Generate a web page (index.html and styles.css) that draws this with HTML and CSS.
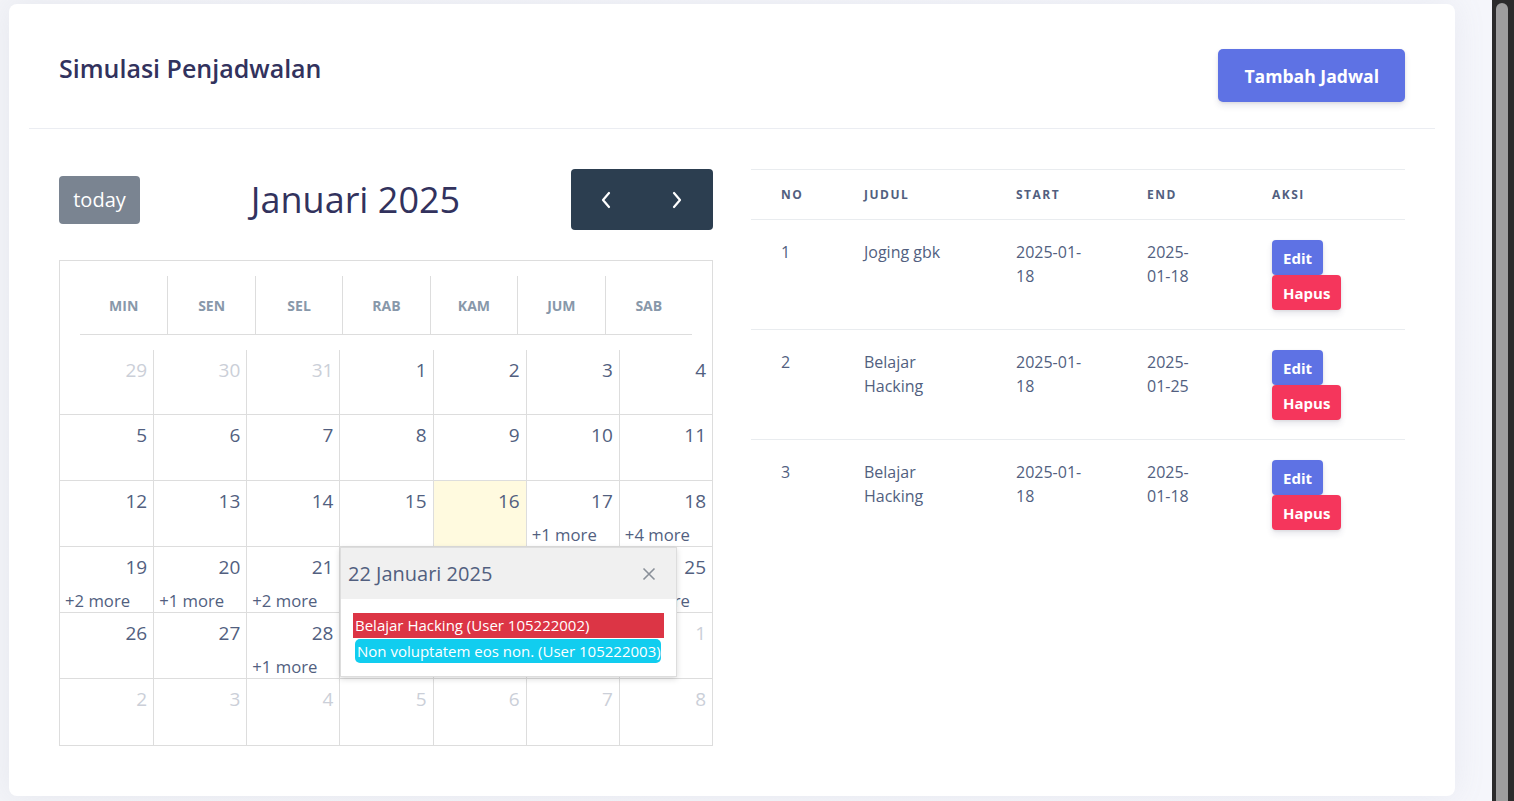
FILE: index.html
```html
<!DOCTYPE html>
<html lang="id">
<head>
<meta charset="utf-8">
<title>Simulasi Penjadwalan</title>
<link rel="stylesheet" href="styles.css">
</head>
<body>
<div class="viewport">
  <main class="page">
    <section class="card">
      <header class="card-header">
        <h3 class="card-title">Simulasi Penjadwalan</h3>
        <button class="btn btn-primary btn-lg">Tambah Jadwal</button>
      </header>
      <div class="card-body">
        <div class="calendar">
          <div class="cal-toolbar">
            <button class="btn-today">today</button>
            <h2 class="cal-title">Januari 2025</h2>
            <div class="cal-nav">
              <button class="nav-btn" aria-label="prev"><svg width="12" height="18" viewBox="0 0 12 18"><path d="M9 2 L3 9 L9 16" fill="none" stroke="#fff" stroke-width="2.2" stroke-linecap="round" stroke-linejoin="round"/></svg></button>
              <button class="nav-btn" aria-label="next"><svg width="12" height="18" viewBox="0 0 12 18"><path d="M3 2 L9 9 L3 16" fill="none" stroke="#fff" stroke-width="2.2" stroke-linecap="round" stroke-linejoin="round"/></svg></button>
            </div>
          </div>
          <div class="cal-grid">
            <div class="cal-head">
              <div class="dow">Min</div>
              <div class="dow">Sen</div>
              <div class="dow">Sel</div>
              <div class="dow">Rab</div>
              <div class="dow">Kam</div>
              <div class="dow">Jum</div>
              <div class="dow">Sab</div>
            </div>
            <div class="cal-body">
              <div class="day other"><span class="num">29</span></div>
              <div class="day other"><span class="num">30</span></div>
              <div class="day other"><span class="num">31</span></div>
              <div class="day"><span class="num">1</span></div>
              <div class="day"><span class="num">2</span></div>
              <div class="day"><span class="num">3</span></div>
              <div class="day"><span class="num">4</span></div>

              <div class="day"><span class="num">5</span></div>
              <div class="day"><span class="num">6</span></div>
              <div class="day"><span class="num">7</span></div>
              <div class="day"><span class="num">8</span></div>
              <div class="day"><span class="num">9</span></div>
              <div class="day"><span class="num">10</span></div>
              <div class="day"><span class="num">11</span></div>

              <div class="day"><span class="num">12</span></div>
              <div class="day"><span class="num">13</span></div>
              <div class="day"><span class="num">14</span></div>
              <div class="day"><span class="num">15</span></div>
              <div class="day today"><span class="num">16</span></div>
              <div class="day"><span class="num">17</span><a class="more">+1 more</a></div>
              <div class="day"><span class="num">18</span><a class="more">+4 more</a></div>

              <div class="day"><span class="num">19</span><a class="more">+2 more</a></div>
              <div class="day"><span class="num">20</span><a class="more">+1 more</a></div>
              <div class="day"><span class="num">21</span><a class="more">+2 more</a></div>
              <div class="day"><span class="num">22</span><a class="more">+2 more</a></div>
              <div class="day"><span class="num">23</span></div>
              <div class="day"><span class="num">24</span></div>
              <div class="day"><span class="num">25</span><a class="more">+1 more</a></div>

              <div class="day"><span class="num">26</span></div>
              <div class="day"><span class="num">27</span></div>
              <div class="day"><span class="num">28</span><a class="more">+1 more</a></div>
              <div class="day"><span class="num">29</span></div>
              <div class="day"><span class="num">30</span></div>
              <div class="day"><span class="num">31</span></div>
              <div class="day other"><span class="num">1</span></div>

              <div class="day other"><span class="num">2</span></div>
              <div class="day other"><span class="num">3</span></div>
              <div class="day other"><span class="num">4</span></div>
              <div class="day other"><span class="num">5</span></div>
              <div class="day other"><span class="num">6</span></div>
              <div class="day other"><span class="num">7</span></div>
              <div class="day other"><span class="num">8</span></div>
            </div>
            <div class="popover">
              <div class="pop-head">
                <span class="pop-title">22 Januari 2025</span>
                <svg class="pop-close" width="14" height="14" viewBox="0 0 14 14"><path d="M1.5 1.5 L12.5 12.5 M12.5 1.5 L1.5 12.5" stroke="#8a9099" stroke-width="1.6" fill="none"/></svg>
              </div>
              <div class="pop-body">
                <div class="event event-red">Belajar Hacking (User 105222002)</div>
                <div class="event event-cyan">Non voluptatem eos non. (User 105222003)</div>
              </div>
            </div>
          </div>
        </div>
        <div class="table-wrap">
          <table class="jadwal">
            <colgroup>
              <col class="c-no"><col class="c-judul"><col class="c-start"><col class="c-end"><col class="c-aksi">
            </colgroup>
            <thead>
              <tr><th>No</th><th>Judul</th><th>Start</th><th>End</th><th>Aksi</th></tr>
            </thead>
            <tbody>
              <tr>
                <td>1</td><td>Joging gbk</td><td>2025-01-18</td><td class="td-end">2025-01-18</td>
                <td><div class="actions"><button class="btn btn-sm btn-primary">Edit</button><button class="btn btn-sm btn-danger">Hapus</button></div></td>
              </tr>
              <tr>
                <td>2</td><td>Belajar Hacking</td><td>2025-01-18</td><td class="td-end">2025-01-25</td>
                <td><div class="actions"><button class="btn btn-sm btn-primary">Edit</button><button class="btn btn-sm btn-danger">Hapus</button></div></td>
              </tr>
              <tr>
                <td>3</td><td>Belajar Hacking</td><td>2025-01-18</td><td class="td-end">2025-01-18</td>
                <td><div class="actions"><button class="btn btn-sm btn-primary">Edit</button><button class="btn btn-sm btn-danger">Hapus</button></div></td>
              </tr>
            </tbody>
          </table>
        </div>
      </div>
    </section>
  </main>
  <div class="scrollbar"><div class="thumb"></div></div>
</div>
</body>
</html>
```
FILE: styles.css
```css
* { box-sizing: border-box; }
html, body { margin: 0; height: 100%; }
body {
  font-family: "Open Sans", "Noto Sans", sans-serif;
  color: #525f7f;
  background: #f4f5fa;
  overflow: hidden;
}
button { font-family: inherit; cursor: pointer; }

.viewport { display: flex; height: 100vh; }
.page {
  flex: 1;
  padding: 4px 37px 0 9px;
  background: linear-gradient(90deg, #f3f4f8 0%, #f5f6fb 100%);
}
.scrollbar {
  width: 22px;
  background: #2b2b2b;
  padding: 3px 6px 0 4px;
}
.thumb {
  height: 100%;
  background: #9e9e9e;
  border-radius: 6px 6px 0 0;
}

.card {
  background: #fff;
  border-radius: 8px;
  box-shadow: 0 0 2rem 0 rgba(136, 152, 170, .12);
}
.card-header {
  margin: 0 20px;
  padding: 45px 30px 26px;
  border-bottom: 1px solid #ebedf2;
  display: flex;
  justify-content: space-between;
  align-items: flex-start;
}
.card-title {
  margin: 2px 0 0;
  font-size: 25px;
  line-height: 34px;
  font-weight: 600;
  color: #32325d;
}
.btn {
  border: none;
  color: #fff;
  font-weight: 700;
  border-radius: 4px;
  box-shadow: 0 4px 6px rgba(50, 50, 93, .11), 0 1px 3px rgba(0, 0, 0, .08);
}
.btn-primary { background: #5e72e4; }
.btn-danger { background: #f5365c; }
.btn-lg {
  height: 53px;
  padding: 0 26px;
  font-size: 17.6px;
  border-radius: 5px;
}
.btn-sm {
  height: 35px;
  padding: 0 11px;
  font-size: 15px;
}

.card-body {
  padding: 40px 50px 50px;
  display: grid;
  grid-template-columns: 1fr 1fr;
  gap: 38px;
  align-items: start;
}

/* calendar */
.cal-toolbar {
  height: 61px;
  margin-bottom: 30px;
  display: flex;
  align-items: center;
  justify-content: space-between;
}
.btn-today {
  width: 81px;
  height: 48px;
  border: none;
  border-radius: 4px;
  background: #7a8491;
  color: #fff;
  font-size: 20px;
  padding: 0;
}
.cal-title {
  margin: 0;
  font-size: 36px;
  font-weight: 500;
  color: #32325d;
  line-height: 1.2;
}
.cal-nav {
  display: flex;
  background: #2c3e50;
  border-radius: 4px;
}
.nav-btn {
  width: 71px;
  height: 61px;
  border: none;
  background: transparent;
  display: flex;
  align-items: center;
  justify-content: center;
  padding: 0;
}

.cal-grid {
  position: relative;
  border: 1px solid #ddd;
}
.cal-head {
  margin: 15px 20px 0;
  height: 59px;
  display: grid;
  grid-template-columns: repeat(7, 1fr);
  border-bottom: 1px solid #ddd;
}
.dow {
  display: flex;
  align-items: center;
  justify-content: center;
  font-size: 14px;
  font-weight: 700;
  color: #8898aa;
  text-transform: uppercase;
}
.dow + .dow { border-left: 1px solid #ddd; }

.cal-body {
  margin-top: 15px;
  display: grid;
  grid-template-columns: repeat(7, 1fr);
  grid-template-rows: 65px repeat(5, 66px);
}
.day {
  display: flex;
  flex-direction: column;
  padding: 6px 6px 0 5px;
  border-left: 1px solid #ddd;
  border-bottom: 1px solid #ddd;
  min-width: 0;
}
.day:nth-child(7n+1) { border-left: none; }
.day:nth-last-child(-n+7) { border-bottom: none; }
.day.today { background: #fffadf; }
.num {
  align-self: flex-end;
  font-size: 19px;
  line-height: 28px;
  color: #525f7f;
}
.day.other .num { color: #cbcfd8; }
.more {
  margin-top: 9px;
  font-size: 16.7px;
  line-height: 22px;
  color: #525f7f;
  white-space: nowrap;
}

.popover {
  position: absolute;
  left: 280px;
  top: 286px;
  width: 337px;
  background: #fff;
  border: 1px solid #ddd;
  box-shadow: 0 2px 6px rgba(0, 0, 0, .15);
}
.pop-head {
  height: 51px;
  background: #f0f0f0;
  display: flex;
  align-items: center;
  justify-content: space-between;
  padding: 0 20px 0 7px;
}
.pop-title {
  font-size: 20px;
  color: #525f7f;
}
.pop-body {
  padding: 14px 12px 13px;
}
.event {
  color: #fff;
  font-size: 15px;
  white-space: nowrap;
  overflow: hidden;
  padding: 0 2px;
}
.event-red {
  background: #dc3545;
  height: 25px;
  line-height: 25px;
}
.event-cyan {
  background: #11cdef;
  height: 24px;
  line-height: 24px;
  margin: 1px 3px 0 2px;
  border-radius: 5px;
}

/* table */
.jadwal {
  width: 100%;
  border-collapse: collapse;
  table-layout: fixed;
}
.c-no { width: 83px; }
.c-judul { width: 152px; }
.c-start { width: 131px; }
.c-end { width: 125px; }
.c-aksi { width: 163px; }
.jadwal th {
  height: 50px;
  padding: 0 30px;
  text-align: left;
  font-size: 12px;
  font-weight: 700;
  letter-spacing: 1.5px;
  text-transform: uppercase;
  color: #525f7f;
  border-top: 1px solid #e9ecef;
  border-bottom: 1px solid #e9ecef;
}
.jadwal td {
  padding: 20px 30px 19px;
  vertical-align: top;
  font-size: 16px;
  line-height: 24px;
  color: #525f7f;
  border-bottom: 1px solid #e9ecef;
}
.jadwal td.td-end { padding-right: 40px; }
.jadwal tbody tr:last-child td { border-bottom: none; }
.actions {
  display: flex;
  flex-direction: column;
  align-items: flex-start;
}
```
